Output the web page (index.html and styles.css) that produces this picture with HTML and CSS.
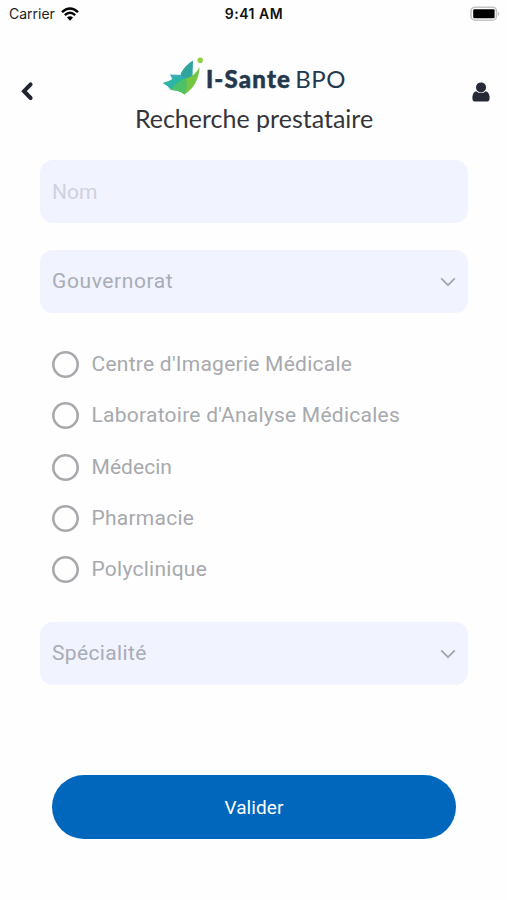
FILE: index.html
```html
<!DOCTYPE html>
<html lang="fr">
<head>
  <meta charset="utf-8">
  <title>Recherche prestataire</title>
  <link rel="stylesheet" href="styles.css">
</head>
<body>
  <div class="status-bar">
    <div class="carrier">
      <span>Carrier</span>
      <svg class="wifi" width="18" height="14" viewBox="0 0 18 14">
        <path d="M1 5.2 Q9 -2.2 17 5.2" fill="none" stroke="#000" stroke-width="2.5"/>
        <path d="M3.8 8.2 Q9 3.3 14.2 8.2" fill="none" stroke="#000" stroke-width="2.3"/>
        <path d="M6 10.6 Q9 7.8 12 10.6 L9 13.7 Z" fill="#000"/>
      </svg>
    </div>
    <div class="time">9:41 AM</div>
    <svg class="battery" width="31" height="16" viewBox="0 0 31 16">
      <rect x="1" y="1.2" width="25.5" height="13" rx="4" fill="#fff" stroke="#c4c4c4" stroke-width="1.6"/>
      <rect x="3.2" y="3.3" width="21.4" height="8.9" rx="1" fill="#000"/>
      <path d="M28 5.4 Q30.6 7.7 28 10 Z" fill="#bdbdbd"/>
    </svg>
  </div>

  <header class="header">
    <a class="back" href="#" aria-label="Retour">
      <svg width="14" height="20" viewBox="0 0 14 20">
        <path d="M10.6 3.4 L4 10.2 L10.6 17" fill="none" stroke="#20242e" stroke-width="4" stroke-linecap="round"/>
      </svg>
    </a>
    <div class="brand">
      <div class="logo">
        <svg width="42" height="40" viewBox="0 0 42 40">
          <path d="M8 18.5 L21 19 L27 25 L20 32 L13 29 Z" fill="#3fadb8"/>
          <path d="M31 4.5 Q23 9 18.5 18 L26 28 L30.5 20 Z" fill="#2fa59f"/>
          <path d="M0.5 27 Q8 25 14 21 L26 22 L22 35 L9 34 Q5 29 0.5 27 Z" fill="#2bb5a5"/>
          <path d="M37.5 11 Q33 20 24 22.5 Q16 25 9 34 Q17 34 22.5 38.5 Q37 29 37.5 11 Z" fill="#74c643"/>
          <path d="M24 22.5 Q16 24 9 34 Q17 34 22.5 38.5 Q26 30 24 22.5 Z" fill="#4fc06a"/>
          <circle cx="38.2" cy="4.2" r="2.8" fill="#91d046"/>
        </svg>
        <span class="logo-name">I-Sante</span>
        <span class="logo-suffix">BPO</span>
      </div>
      <h1>Recherche prestataire</h1>
    </div>
    <a class="profile" href="#" aria-label="Profil">
      <svg width="18" height="20" viewBox="0 0 18 20">
        <path d="M4.3 9.2 Q6.2 11.1 9 11.1 Q11.8 11.1 13.7 9.2 Q17.6 10.2 17.6 16.2 Q17.6 19.6 14.6 19.6 H3.4 Q.4 19.6 .4 16.2 Q.4 10.2 4.3 9.2 Z" fill="#252a34"/>
        <circle cx="9" cy="5.4" r="5" fill="#252a34"/>
      </svg>
    </a>
  </header>

  <form class="search-form" onsubmit="event.preventDefault()">
    <input class="field" type="text" placeholder="Nom">

    <div class="select-field">
      <span class="gouvernorat">Gouvernorat</span>
      <svg width="16" height="10" viewBox="0 0 16 10">
        <path d="M1.2 1.4 L8 8.2 L14.8 1.4" fill="none" stroke="#a3a6b1" stroke-width="1.8"/>
      </svg>
    </div>

    <div class="type-group">
      <label><input type="radio" name="type"><span>Centre d'Imagerie Médicale</span></label>
      <label><input type="radio" name="type"><span>Laboratoire d'Analyse Médicales</span></label>
      <label><input type="radio" name="type"><span class="medecin">Médecin</span></label>
      <label><input type="radio" name="type"><span>Pharmacie</span></label>
      <label><input type="radio" name="type"><span>Polyclinique</span></label>
    </div>

    <div class="select-field">
      <span class="specialite">Spécialité</span>
      <svg width="16" height="10" viewBox="0 0 16 10">
        <path d="M1.2 1.4 L8 8.2 L14.8 1.4" fill="none" stroke="#a3a6b1" stroke-width="1.8"/>
      </svg>
    </div>

    <button class="submit" type="submit">Valider</button>
  </form>
</body>
</html>
```

FILE: styles.css
```css
* {
  box-sizing: border-box;
}

body {
  font-family: Roboto, "Liberation Sans", sans-serif;
  background-color: #fefefe;
  margin: 0;
}

.status-bar {
  display: grid;
  grid-template-columns: 1fr auto 1fr;
  align-items: center;
  height: 27px;
  padding: 0 6px 0 9px;
  font-family: Inter, sans-serif;
  font-size: 14px;
  color: #222;
}

.carrier {
  display: flex;
  align-items: center;
  gap: 6px;
}

.time {
  font-weight: 600;
  letter-spacing: 0.5px;
  margin-left: -2px;
  color: #111;
}

.battery {
  justify-self: end;
}

.header {
  display: grid;
  grid-template-columns: 60px 1fr 60px;
  height: 133px;
  padding-top: 28px;
}

.back {
  padding: 26px 0 0 20px;
}

.profile {
  padding: 27px 0 0 25px;
}

.brand {
  display: flex;
  flex-direction: column;
  align-items: center;
  padding-left: 1px;
}

.logo {
  display: flex;
  align-items: center;
  height: 42px;
  font-family: Lato, sans-serif;
  font-size: 24px;
  color: #23384e;
}

.logo-name {
  font-weight: 900;
  margin: 4px 0 0 2px;
  letter-spacing: 1.2px;
  -webkit-text-stroke: 0.5px #23384e;
}

.logo-suffix {
  margin: 4px 0 0 4px;
  letter-spacing: 0.6px;
}

h1 {
  margin: 4px 0 0;
  font-family: Lato, sans-serif;
  font-size: 25px;
  line-height: 34px;
  font-weight: 400;
  color: #35353b;
}

.search-form {
  padding: 0 39px 0 40px;
}

.field,
.select-field {
  display: flex;
  align-items: center;
  justify-content: space-between;
  width: 100%;
  height: 63px;
  padding: 0 12px;
  border: none;
  border-radius: 13px;
  background-color: #f1f3ff;
  font-family: inherit;
  font-size: 21px;
  color: #a9acb6;
}

.field {
  margin-bottom: 27px;
}

.field::placeholder {
  color: #cfd1df;
}

.gouvernorat {
  letter-spacing: 0.6px;
  padding-bottom: 2px;
}

.specialite {
  letter-spacing: 0.35px;
  padding-bottom: 2px;
}

.type-group {
  padding: 26px 12px 27px;
}

.type-group label {
  display: flex;
  align-items: center;
  gap: 12.5px;
  height: 51.3px;
  font-size: 21px;
  letter-spacing: 0.25px;
  color: #a7a9ad;
}

.type-group span {
  padding-bottom: 1px;
}

.type-group .medecin {
  letter-spacing: 0.05px;
}

.type-group input {
  appearance: none;
  width: 27px;
  height: 27px;
  margin: 0;
  border-radius: 50%;
  box-shadow: inset 0 0 0 2.6px #a7a9ad;
}

.submit {
  display: block;
  width: 404px;
  height: 64px;
  margin: 90px 0 0 12px;
  border: none;
  border-radius: 32px;
  background-color: #0067bc;
  font-family: inherit;
  font-size: 19px;
  letter-spacing: 0.1px;
  color: #fff;
}
```
